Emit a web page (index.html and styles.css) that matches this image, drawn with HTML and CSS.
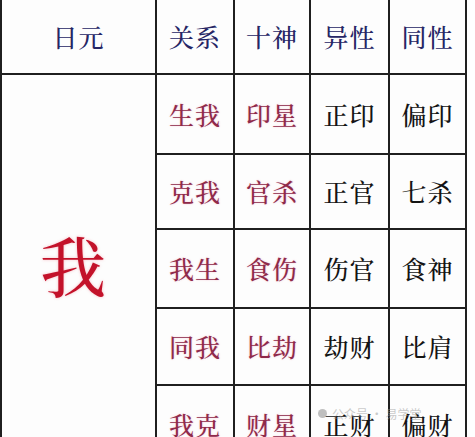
FILE: index.html
```html
<!DOCTYPE html>
<html lang="zh">
<head>
<meta charset="utf-8">
<title>十神关系表</title>
<link rel="stylesheet" href="styles.css">
</head>
<body>
<div class="sheet">
  <div class="grid">
    <div class="cell head">日元</div>
    <div class="cell head">关系</div>
    <div class="cell head">十神</div>
    <div class="cell head">异性</div>
    <div class="cell head">同性</div>

    <div class="cell self">我</div>

    <div class="cell rel">生我</div>
    <div class="cell rel">印星</div>
    <div class="cell plain">正印</div>
    <div class="cell plain">偏印</div>

    <div class="cell rel">克我</div>
    <div class="cell rel">官杀</div>
    <div class="cell plain">正官</div>
    <div class="cell plain">七杀</div>

    <div class="cell rel">我生</div>
    <div class="cell rel">食伤</div>
    <div class="cell plain">伤官</div>
    <div class="cell plain">食神</div>

    <div class="cell rel">同我</div>
    <div class="cell rel">比劫</div>
    <div class="cell plain">劫财</div>
    <div class="cell plain">比肩</div>

    <div class="cell rel">我克</div>
    <div class="cell rel">财星</div>
    <div class="cell plain">正财</div>
    <div class="cell plain">偏财</div>
  </div>
  <div class="mark"><span class="dot"></span>公众号 · 易学堂</div>
</div>
</body>
</html>
```

FILE: styles.css
```css
html, body {
  margin: 0;
  padding: 0;
  background: #ffffff;
}

body {
  width: 475px;
  height: 437px;
  overflow: hidden;
  font-family: "Noto Serif CJK SC", "Noto Sans CJK SC", serif;
}

.sheet {
  position: relative;
  width: 475px;
  height: 437px;
  overflow: hidden;
}

.grid {
  display: grid;
  width: max-content;
  grid-template-columns: 153px 76px 74px 77px 75px;
  grid-template-rows: 73px 78px 73px 77px 75px 76px;
  gap: 2px;
  padding: 0 2px 2px 2px;
  background: #1f1f1f;
}

.cell {
  background: #fdfdfd;
  display: flex;
  align-items: center;
  justify-content: center;
  font-size: 25px;
  font-weight: 500;
  line-height: 1;
  letter-spacing: 1px;
}

.head {
  color: #262665;
}

.rel {
  color: #8f2a4a;
  text-shadow: 0 0 2px rgba(230, 120, 150, 0.45);
}

.plain {
  color: #141414;
}

.self {
  grid-column: 1;
  grid-row: 2 / span 5;
  color: #c3122a;
  font-size: 66px;
  font-weight: 500;
  padding-right: 10px;
  padding-bottom: 10px;
  text-shadow: 0 0 3px rgba(230, 60, 80, 0.35);
}

.mark {
  position: absolute;
  left: 318px;
  top: 405px;
  display: flex;
  align-items: center;
  gap: 5px;
  font-family: "Noto Sans CJK SC", sans-serif;
  font-size: 12px;
  color: rgba(150, 150, 150, 0.5);
}

.dot {
  width: 9px;
  height: 9px;
  border-radius: 50%;
  background: rgba(140, 140, 140, 0.55);
}
```
